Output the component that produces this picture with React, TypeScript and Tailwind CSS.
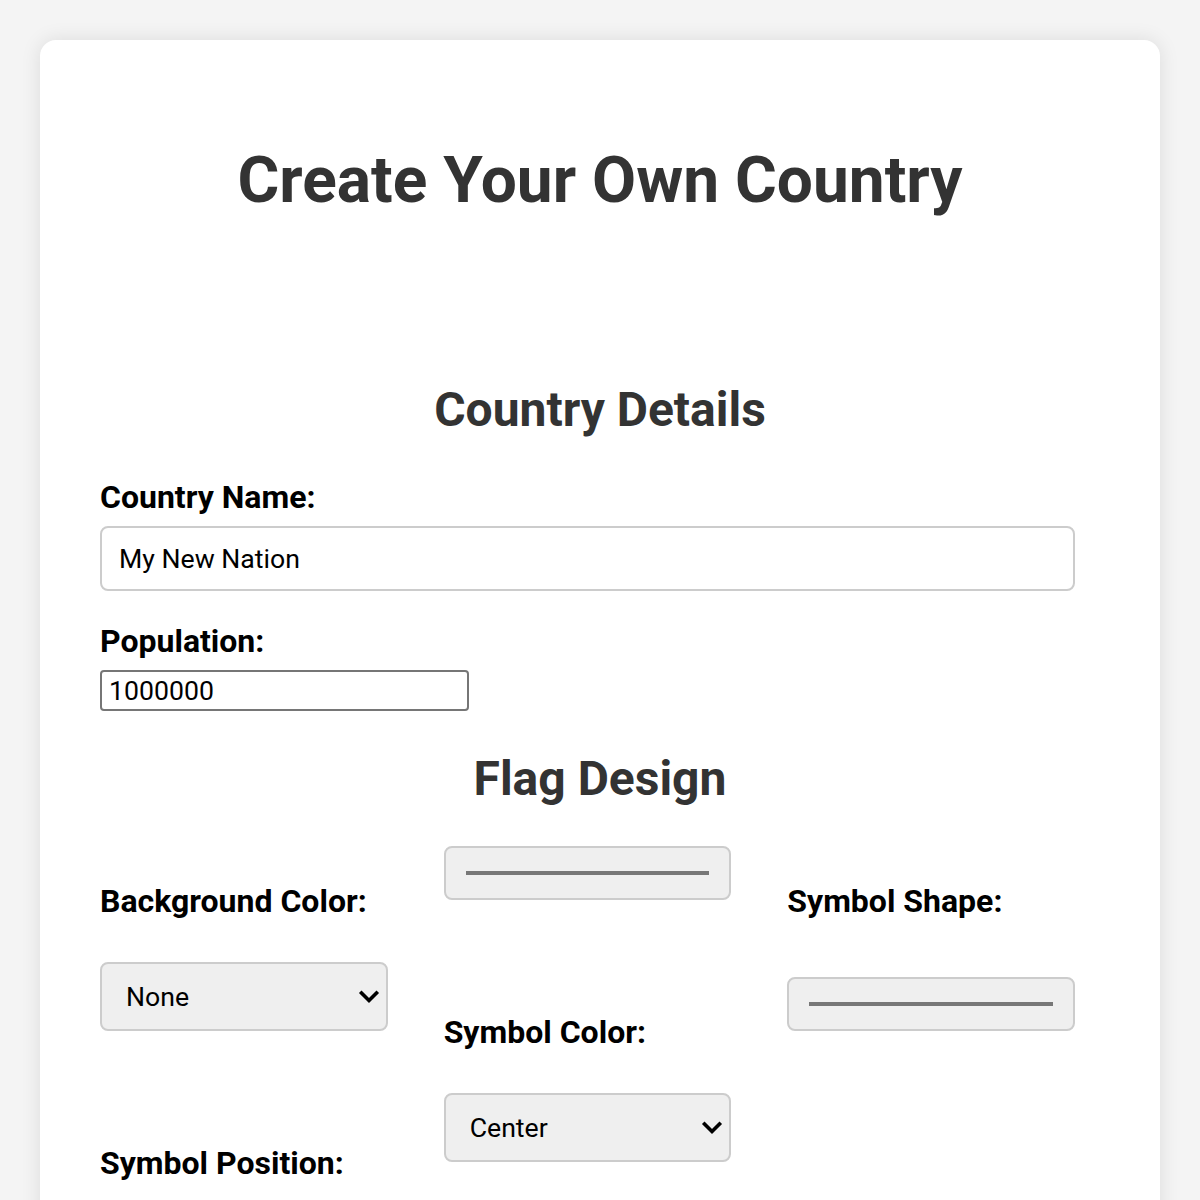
import React from "react";

function ColorBox() {
  return (
    <div className="mb-[30px] flex h-[54px] w-full items-center rounded-[8px] border-2 border-[#ccc] bg-[#efefef] px-[20px]">
      <div className="h-[4px] w-full bg-[#777]" />
    </div>
  );
}

function SelectBox({ text }: { text: string }) {
  return (
    <div className="mb-[30px] flex h-[69px] w-full items-center justify-between rounded-[8px] border-2 border-[#ccc] bg-[#efefef] pl-[24px] pr-[6px] text-[26.67px] text-black">
      <span>{text}</span>
      <svg width="22" height="14" viewBox="0 0 22 14">
        <path d="M3.5 3 L11 10.5 L18.5 3" fill="none" stroke="#000" strokeWidth="3.6" strokeLinecap="square" />
      </svg>
    </div>
  );
}

function Label({ children }: { children: React.ReactNode }) {
  return <div className="mb-[10px] text-[32px] font-bold leading-[38px] text-black">{children}</div>;
}

export default function App() {
  return (
    <div
      className="min-h-screen bg-[#f4f4f4] px-[40px] pt-[40px]"
      style={{ fontFamily: "Roboto, 'Noto Sans', sans-serif" }}
    >
      <div className="rounded-[16px] bg-white px-[60px] pb-[200px] pt-[103px] shadow-[0_0_20px_rgba(0,0,0,0.1)]">
        <h1 className="text-center text-[64px] font-bold leading-[75px] text-[#333]">Create Your Own Country</h1>
        <h2 className="mt-[164px] text-center text-[48px] font-bold leading-[56px] text-[#333]">Country Details</h2>
        <div className="mt-[40px] w-[975px]">
          <Label>Country Name:</Label>
          <div className="flex h-[65px] w-full items-center rounded-[8px] border-2 border-[#ccc] bg-white pl-[17px] text-[26.67px] text-black">
            My New Nation
          </div>
          <div className="mt-[31px]">
            <Label>Population:</Label>
          </div>
          <div className="mt-[2px] flex h-[41px] w-[369px] items-center rounded-[4px] border-2 border-[#767676] bg-white pl-[7px] text-[26.67px] text-black">
            1000000
          </div>
        </div>
        <h2 className="mt-[40px] text-center text-[48px] font-bold leading-[56px] text-[#333]">Flag Design</h2>
        <div className="mt-[39px] grid w-[975px] grid-cols-3 items-end gap-x-[56px] gap-y-[32px]">
          <Label>Background Color:</Label>
          <ColorBox />
          <Label>Symbol Shape:</Label>
          <SelectBox text="None" />
          <Label>Symbol Color:</Label>
          <ColorBox />
          <Label>Symbol Position:</Label>
          <SelectBox text="Center" />
          <div />
        </div>
      </div>
    </div>
  );
}
